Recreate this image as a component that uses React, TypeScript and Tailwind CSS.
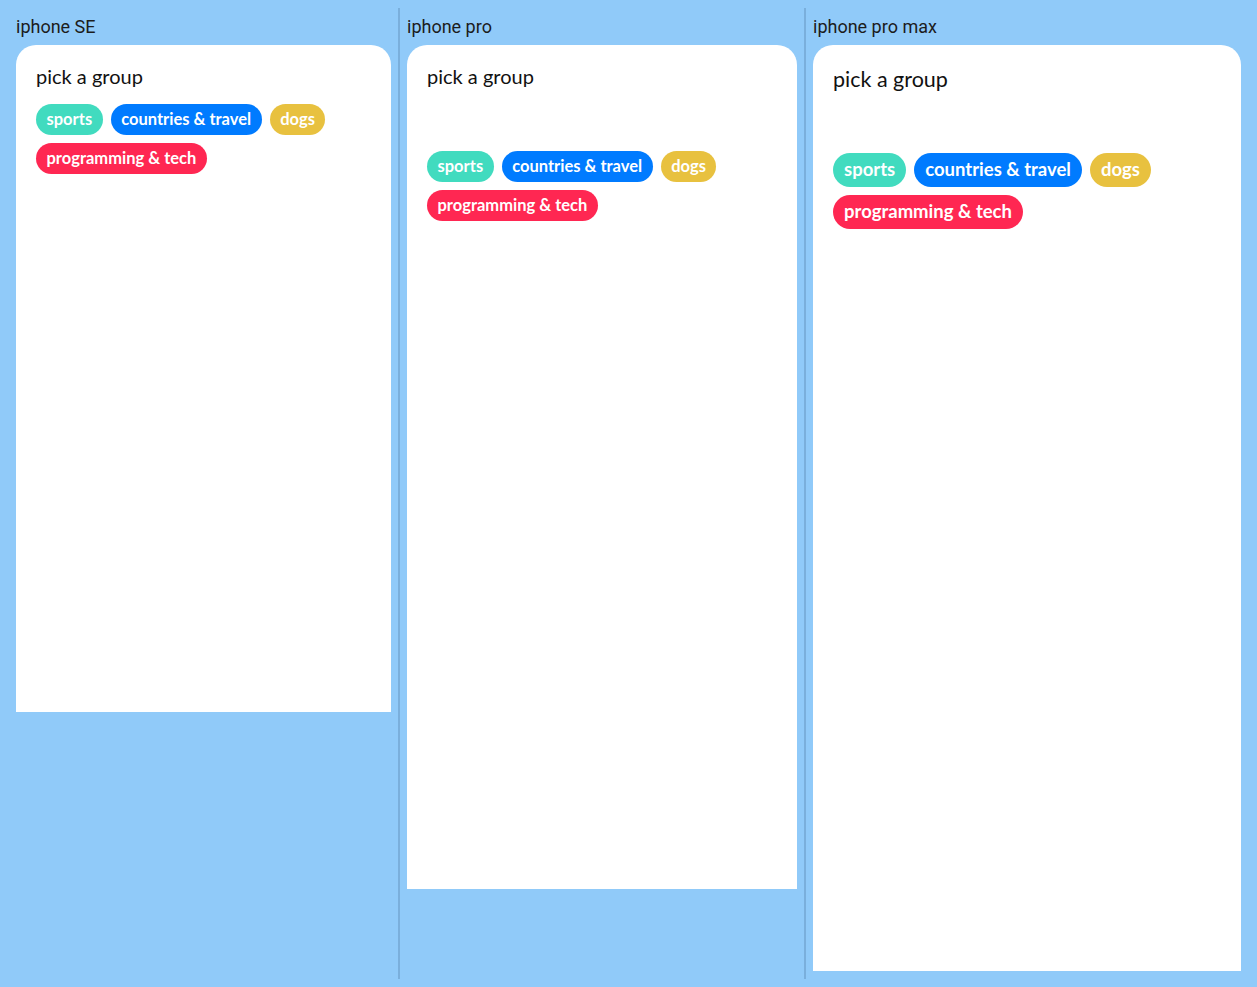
const groups = [
  { name: "sports", color: "bg-[#41dbbf]" },
  { name: "countries & travel", color: "bg-[#007bff]" },
  { name: "dogs", color: "bg-[#e8c13f]" },
  { name: "programming & tech", color: "bg-[#ff2752]" },
];

const Chips = ({ big }: { big?: boolean }) => (
  <div className={`flex flex-wrap ${big ? "gap-x-2 gap-y-[8px] text-[18.5px]" : "gap-2 text-[16.5px]"}`}>
    {groups.map((g) => (
      <span
        key={g.name}
        className={`${g.color} ${big ? "h-[34px] px-[11px]" : "h-[31px] px-[10.5px]"} flex items-center rounded-full font-bold text-white`}
      >
        {g.name}
      </span>
    ))}
  </div>
);

const Phone = ({
  label,
  w,
  h,
  variant,
}: {
  label: string;
  w: string;
  h: string;
  variant: "se" | "pro" | "max";
}) => (
  <div className="flex flex-col">
    <div className="h-[37px] flex items-center text-[18px] text-[#1c1c1c] font-['Roboto',sans-serif]">
      {label}
    </div>
    <div className={`${w} ${h} bg-white rounded-t-[20px] px-5 pt-5`}>
      <h1
        className={`${variant === "max" ? "text-[21.5px] leading-[28px]" : "text-[20px] leading-[22px]"} text-[#111]`}
      >
        pick a group
      </h1>
      <div className={variant === "se" ? "mt-[17px]" : variant === "pro" ? "mt-[64px]" : "mt-[60px]"}>
        <Chips big={variant === "max"} />
      </div>
    </div>
  </div>
);

export default function App() {
  return (
    <div className="min-h-[987px] bg-[#90caf9] flex p-2 font-['Lato',sans-serif]">
      <div className="pl-2 pr-[7px] pb-2">
        <Phone label="iphone SE" w="w-[375px]" h="h-[667px]" variant="se" />
      </div>
      <div className="w-[2px] bg-[#7aafdc]" />
      <div className="px-[7px] pb-2">
        <Phone label="iphone pro" w="w-[390px]" h="h-[844px]" variant="pro" />
      </div>
      <div className="w-[2px] bg-[#7aafdc]" />
      <div className="pl-[7px] pb-2">
        <Phone label="iphone pro max" w="w-[428px]" h="h-[926px]" variant="max" />
      </div>
    </div>
  );
}
